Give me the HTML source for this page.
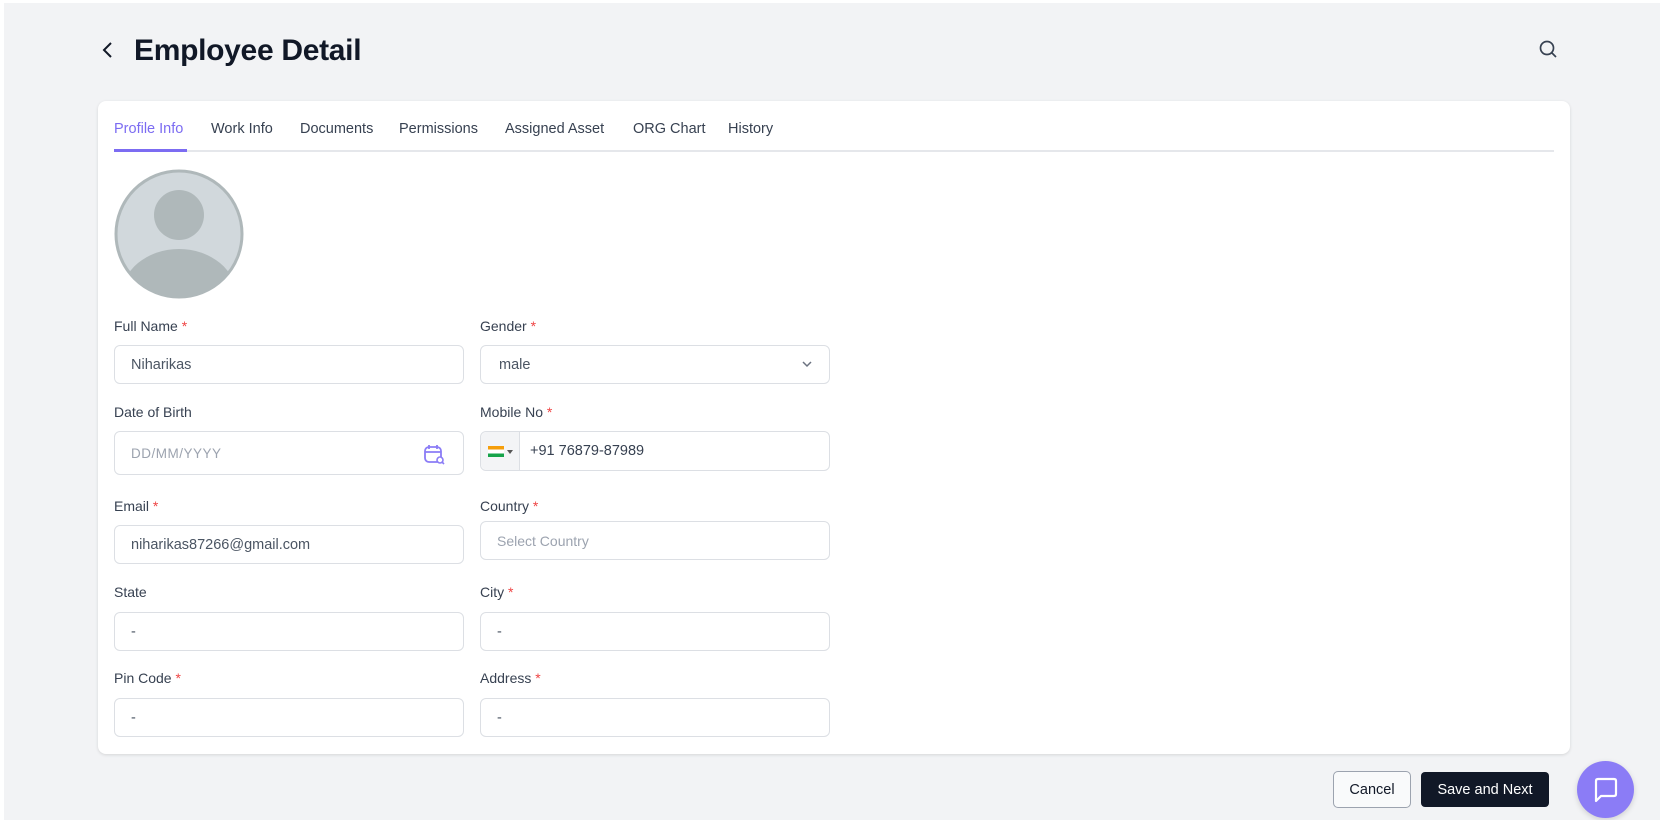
<!DOCTYPE html>
<html><head><meta charset="utf-8"><style>
*{box-sizing:border-box;margin:0;padding:0}
body{width:1660px;height:820px;background:#f2f3f5;font-family:"Liberation Sans",Arial,sans-serif;position:relative;overflow:hidden}
.abs{position:absolute}
.title{left:134px;top:34px;font-size:30px;font-weight:bold;color:#111827;letter-spacing:-0.3px}
.card{left:98px;top:101px;width:1472px;height:653px;background:#fff;border-radius:8px;box-shadow:0 1px 3px rgba(0,0,0,.12)}
.tab{top:121px;font-size:14.5px;color:#374151;white-space:nowrap}
.tabline{left:114px;top:150px;width:1440px;height:2px;background:#e5e7eb}
.lbl{font-size:14px;color:#374151}
.lbl b{color:#ef4444;font-weight:normal}
.inp{border:1px solid #dcdfe4;border-radius:6px;background:#fff;font-size:14.5px;color:#4b5563;padding-left:16px;display:flex;align-items:center}
.ph{color:#9ca3af}
</style></head><body>
<div class="abs" style="left:0;top:0;width:1660px;height:3px;background:#fff"></div>
<div class="abs" style="left:0;top:0;width:4px;height:820px;background:#fff"></div>
<svg class="abs" style="left:101px;top:41px" width="14" height="18" viewBox="0 0 14 18"><path d="M10 2 L3 9 L10 16" fill="none" stroke="#111827" stroke-width="2"/></svg>
<div class="abs title">Employee Detail</div>
<svg class="abs" style="left:1538px;top:39px" width="20" height="20" viewBox="0 0 20 20"><circle cx="9" cy="9" r="6.5" fill="none" stroke="#374151" stroke-width="1.7"/><path d="M14 14 L18 18" stroke="#374151" stroke-width="1.7"/></svg>
<div class="abs card"></div>
<div class="abs tabline"></div>
<div class="abs" style="left:114px;top:149px;width:73px;height:3px;background:#7c6cf2"></div>
<div class="abs tab" style="left:114px;color:#7c6cf2">Profile Info</div>
<div class="abs tab" style="left:211px">Work Info</div>
<div class="abs tab" style="left:300px">Documents</div>
<div class="abs tab" style="left:399px">Permissions</div>
<div class="abs tab" style="left:505px">Assigned Asset</div>
<div class="abs tab" style="left:633px">ORG Chart</div>
<div class="abs tab" style="left:728px">History</div>
<svg class="abs" style="left:114px;top:169px" width="130" height="130" viewBox="0 0 130 130"><defs><clipPath id="c"><circle cx="65" cy="65" r="63"/></clipPath></defs><circle cx="65" cy="65" r="63" fill="#d1d8dc"/><g clip-path="url(#c)"><ellipse cx="65" cy="46" rx="25" ry="25" fill="#afb8ba"/><ellipse cx="65" cy="128" rx="58" ry="48" fill="#afb8ba"/></g><circle cx="65" cy="65" r="63" fill="none" stroke="#afb8ba" stroke-width="3"/></svg>

<div class="abs lbl" style="left:114px;top:318px">Full Name <b>*</b></div>
<div class="abs inp" style="left:114px;top:345px;width:350px;height:39px">Niharikas</div>
<div class="abs lbl" style="left:480px;top:318px">Gender <b>*</b></div>
<div class="abs inp" style="left:480px;top:345px;width:350px;height:39px;padding-left:18px">male<svg style="position:absolute;right:16px;top:14px" width="12" height="8" viewBox="0 0 12 8"><path d="M2 2 L6 6 L10 2" fill="none" stroke="#6b7280" stroke-width="1.5"/></svg></div>

<div class="abs lbl" style="left:114px;top:404px">Date of Birth</div>
<div class="abs inp ph" style="left:114px;top:431px;width:350px;height:44px;font-size:13.5px;letter-spacing:.5px">DD/MM/YYYY<svg style="position:absolute;right:18px;top:11px" width="22" height="22" viewBox="0 0 22 22"><rect x="2" y="4" width="16" height="15" rx="4" fill="none" stroke="#8b7cf6" stroke-width="1.8"/><path d="M6 2v4M14 2v4M2 9h16" stroke="#8b7cf6" stroke-width="1.8"/><circle cx="17" cy="17" r="3" fill="#fff" stroke="#8b7cf6" stroke-width="1.6"/><path d="M19 19l2 2" stroke="#8b7cf6" stroke-width="1.6"/></svg></div>
<div class="abs lbl" style="left:480px;top:404px">Mobile No <b>*</b></div>
<div class="abs inp" style="left:480px;top:431px;width:350px;height:40px;padding-left:0"><div style="width:39px;height:100%;background:#f3f4f6;border-right:1px solid #dcdfe4;border-radius:6px 0 0 6px;display:flex;align-items:center;justify-content:center;gap:3px"><span style="display:inline-block;width:16px;height:11px;background:linear-gradient(#f59e0b 0 33%,#fff 33% 66%,#16a34a 66%)"></span><span style="border:3px solid transparent;border-top:4px solid #555;margin-top:4px"></span></div><span style="margin-left:10px;color:#374151">+91 76879-87989</span></div>

<div class="abs lbl" style="left:114px;top:498px">Email <b>*</b></div>
<div class="abs inp" style="left:114px;top:525px;width:350px;height:39px">niharikas87266@gmail.com</div>
<div class="abs lbl" style="left:480px;top:498px">Country <b>*</b></div>
<div class="abs inp ph" style="left:480px;top:521px;width:350px;height:39px;font-size:14px">Select Country</div>

<div class="abs lbl" style="left:114px;top:584px">State</div>
<div class="abs inp" style="left:114px;top:612px;width:350px;height:39px">-</div>
<div class="abs lbl" style="left:480px;top:584px">City <b>*</b></div>
<div class="abs inp" style="left:480px;top:612px;width:350px;height:39px">-</div>

<div class="abs lbl" style="left:114px;top:670px">Pin Code <b>*</b></div>
<div class="abs inp" style="left:114px;top:698px;width:350px;height:39px">-</div>
<div class="abs lbl" style="left:480px;top:670px">Address <b>*</b></div>
<div class="abs inp" style="left:480px;top:698px;width:350px;height:39px">-</div>

<div class="abs" style="left:1333px;top:771px;width:78px;height:37px;border:1px solid #9ca3af;border-radius:5px;background:#f9fafb;font-size:14.5px;color:#111827;display:flex;align-items:center;justify-content:center">Cancel</div>
<div class="abs" style="left:1421px;top:772px;width:128px;height:35px;border-radius:4px;background:#111827;font-size:14.5px;color:#fff;display:flex;align-items:center;justify-content:center">Save and Next</div>
<div class="abs" style="left:1577px;top:761px;width:57px;height:57px;border-radius:50%;background:#8b7cf6;box-shadow:0 2px 6px rgba(0,0,0,.15)"><svg style="position:absolute;left:15px;top:15px" width="28" height="28" viewBox="0 0 28 28"><path d="M4 5 Q4 3 6 3 H22 Q24 3 24 5 V18 Q24 20 22 20 H9 L4 25 Z" fill="none" stroke="#fff" stroke-width="2.2" stroke-linejoin="round"/></svg></div>
</body></html>
